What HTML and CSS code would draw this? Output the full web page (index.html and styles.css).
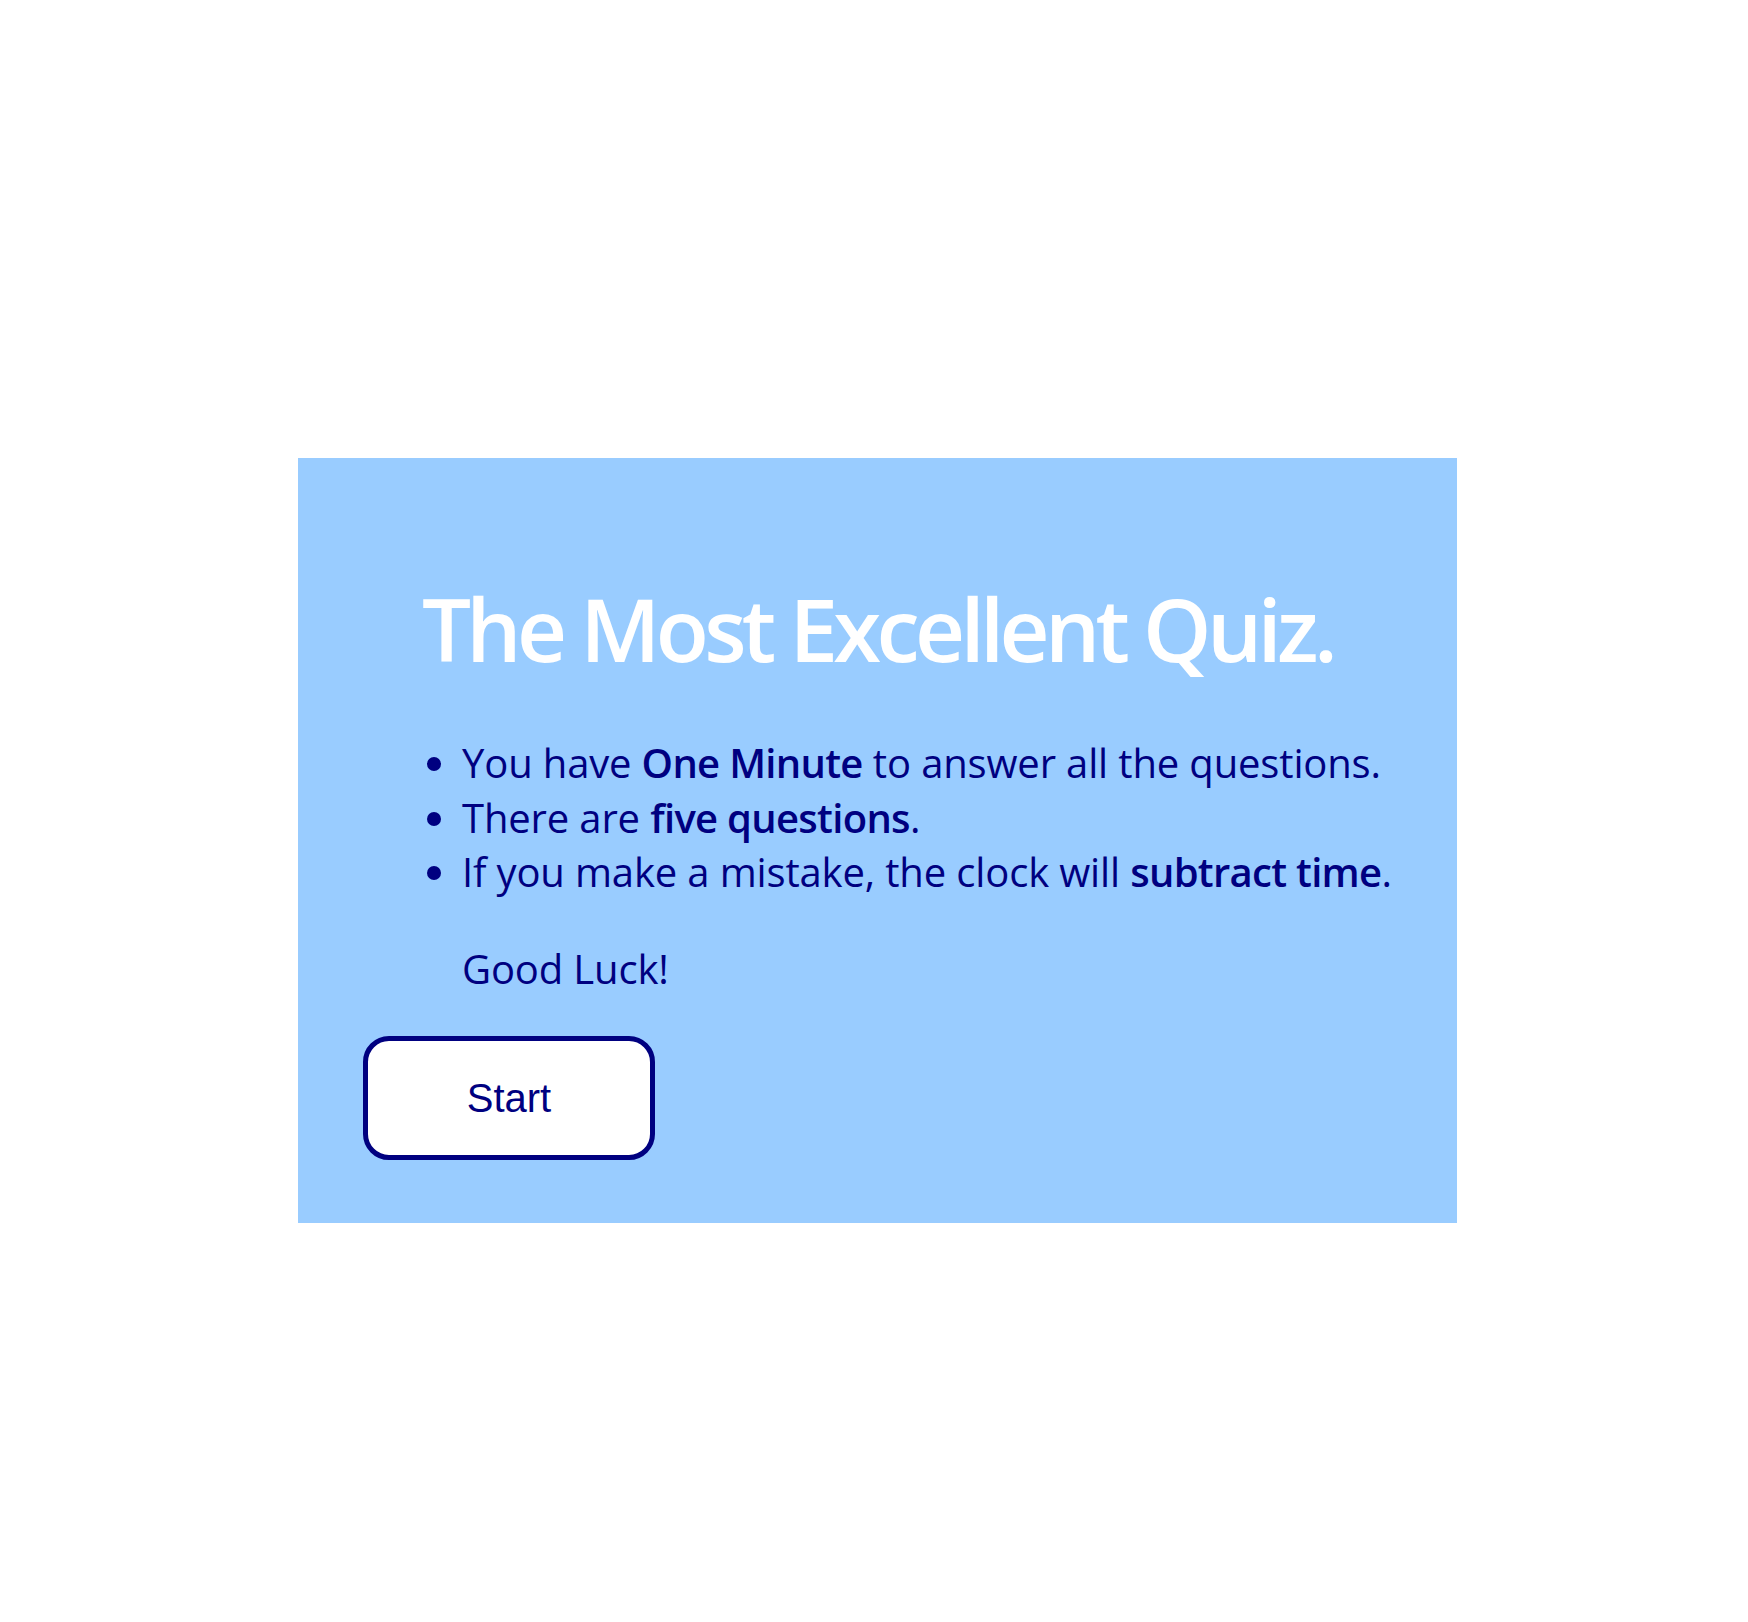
FILE: index.html
```html
<!DOCTYPE html>
<html lang="en">
<head>
<meta charset="utf-8">
<title>The Most Excellent Quiz.</title>
<link rel="stylesheet" href="styles.css">
</head>
<body>
<main class="card">
  <h1 class="title">The Most Excellent Quiz.</h1>
  <ul class="rules">
    <li>You have <strong>One Minute</strong> to answer all the questions.</li>
    <li>There are <strong>five questions</strong>.</li>
    <li>If you make a mistake, the clock will <strong>subtract time</strong>.</li>
  </ul>
  <p class="luck">Good Luck!</p>
  <button class="start" type="button">Start</button>
</main>
</body>
</html>
```

FILE: styles.css
```css
html, body {
  margin: 0;
  padding: 0;
  background: #ffffff;
}

body {
  padding: 458px 0 0 298px;
  font-family: "Open Sans", "Noto Sans", sans-serif;
}

.card {
  box-sizing: border-box;
  width: 1159px;
  height: 765px;
  background: #99ccff;
  padding: 112px 0 0 0;
  color: #000080;
}

.title {
  margin: 0 0 49px 0;
  text-align: center;
  font-size: 87px;
  font-weight: 600;
  line-height: 117px;
  color: #ffffff;
  letter-spacing: -4.7px;
}

.rules {
  margin: 0;
  padding: 0 0 0 164px;
  font-size: 40px;
  line-height: 54.5px;
  letter-spacing: -0.15px;
}

.rules strong {
  font-weight: 600;
  letter-spacing: -0.7px;
}

.luck {
  margin: 42px 0 0 164px;
  font-size: 40px;
  line-height: 54.5px;
  letter-spacing: -0.15px;
}

.start {
  display: block;
  box-sizing: border-box;
  margin: 40px 0 0 65px;
  width: 292px;
  height: 124px;
  background: #ffffff;
  border: 5px solid #000080;
  border-radius: 26px;
  color: #000080;
  font-family: "Liberation Sans", Arial, sans-serif;
  font-size: 40px;
  padding: 0;
}
```
